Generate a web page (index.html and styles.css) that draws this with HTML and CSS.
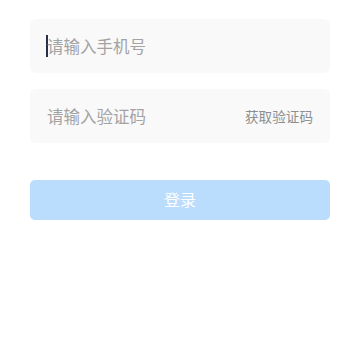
FILE: index.html
```html
<!DOCTYPE html>
<html lang="zh-CN">
<head>
<meta charset="utf-8">
<link rel="stylesheet" href="styles.css">
</head>
<body>
<div class="page">
  <div class="field">
    <span class="caret"></span><span class="placeholder">请输入手机号</span>
  </div>
  <div class="field field-code">
    <span class="placeholder">请输入验证码</span>
    <span class="get-code">获取验证码</span>
  </div>
  <div class="login-btn"><span class="login-text">登录</span></div>
</div>
</body>
</html>
```
FILE: styles.css
```css
html, body {
  margin: 0;
  padding: 0;
  background: #ffffff;
}
body {
  font-family: "Noto Sans CJK SC", "Noto Sans", sans-serif;
}
.page {
  padding: 19px 30px 0;
  display: flex;
  flex-direction: column;
}
.field {
  height: 54px;
  background: #f9f9f9;
  border-radius: 6px;
  display: flex;
  align-items: center;
  padding: 0 17px 0 16px;
  box-sizing: border-box;
  margin-bottom: 16px;
}
.field-code {
  justify-content: space-between;
  padding-left: 17px;
  margin-bottom: 37px;
}
.caret {
  width: 2px;
  height: 22px;
  background: #2b2f45;
  margin-right: -1px;
}
.placeholder {
  font-size: 16.5px;
  color: #a3a3a3;
  line-height: 22px;
}
.get-code {
  font-size: 13.6px;
  color: #8e8e8e;
  line-height: 20px;
}
.login-btn {
  height: 40px;
  border-radius: 5px;
  background: #badcfd;
  color: #ffffff;
  display: flex;
  align-items: center;
  justify-content: center;
}
.login-text {
  font-size: 16px;
  line-height: 20px;
  margin-top: -3px;
}
```
